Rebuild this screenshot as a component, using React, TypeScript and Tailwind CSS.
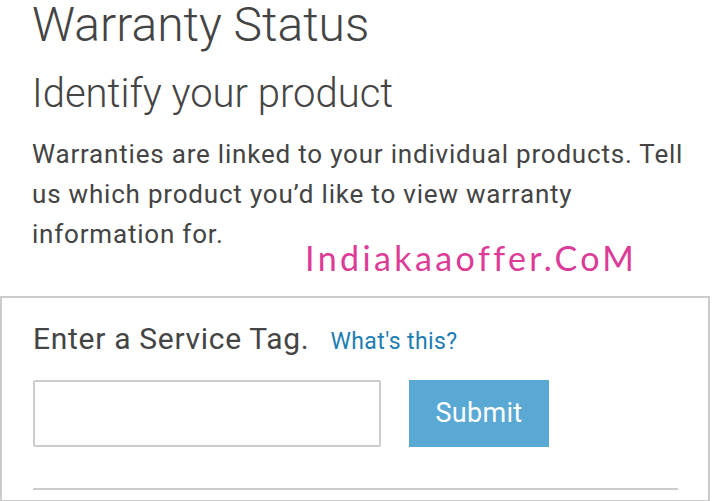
import React from "react";

export default function App() {
  return (
    <div className="relative w-[720px] h-[501px] overflow-hidden bg-white text-[#444] font-['Roboto',sans-serif]">
      <div className="pl-[32px] pr-[30px]">
        <h1 className="text-[48px] leading-[50px] font-light">Warranty Status</h1>
        <h2 className="mt-[22px] text-[40px] leading-[44px] font-light">Identify your product</h2>
        <p className="mt-[18px] text-[26px] leading-[40px] tracking-[0.8px]">
          Warranties are linked to your individual products. Tell us which product you’d like to view warranty
          information for.
        </p>
      </div>

      <div className="absolute left-[305px] top-[241px] text-[34px] leading-none tracking-[3.4px] text-[#dc3b97] font-['Lato',sans-serif]">
        Indiakaaoffer.CoM
      </div>

      <div className="mt-[42px] w-[710px] h-[206px] border-2 border-[#ccc] bg-white pl-[31px] pr-[30px] pt-[26px]">
        <div className="flex items-baseline gap-[21px]">
          <span className="text-[30px] leading-none tracking-[0.7px]">Enter a Service Tag.</span>
          <a href="#" className="text-[23px] leading-none tracking-[0.4px] text-[#1d7db3]">
            What's this?
          </a>
        </div>
        <div className="mt-[26px] flex gap-[28px]">
          <input type="text" className="w-[348px] h-[67px] border-2 border-[#ccc] rounded-[2px] bg-white outline-none" />
          <button className="w-[140px] h-[67px] bg-[#5aa9d4] text-white text-[27px] tracking-[0.3px]">Submit</button>
        </div>
        <div className="mt-[41px] h-[2px] bg-[#ccc]" />
      </div>
    </div>
  );
}
